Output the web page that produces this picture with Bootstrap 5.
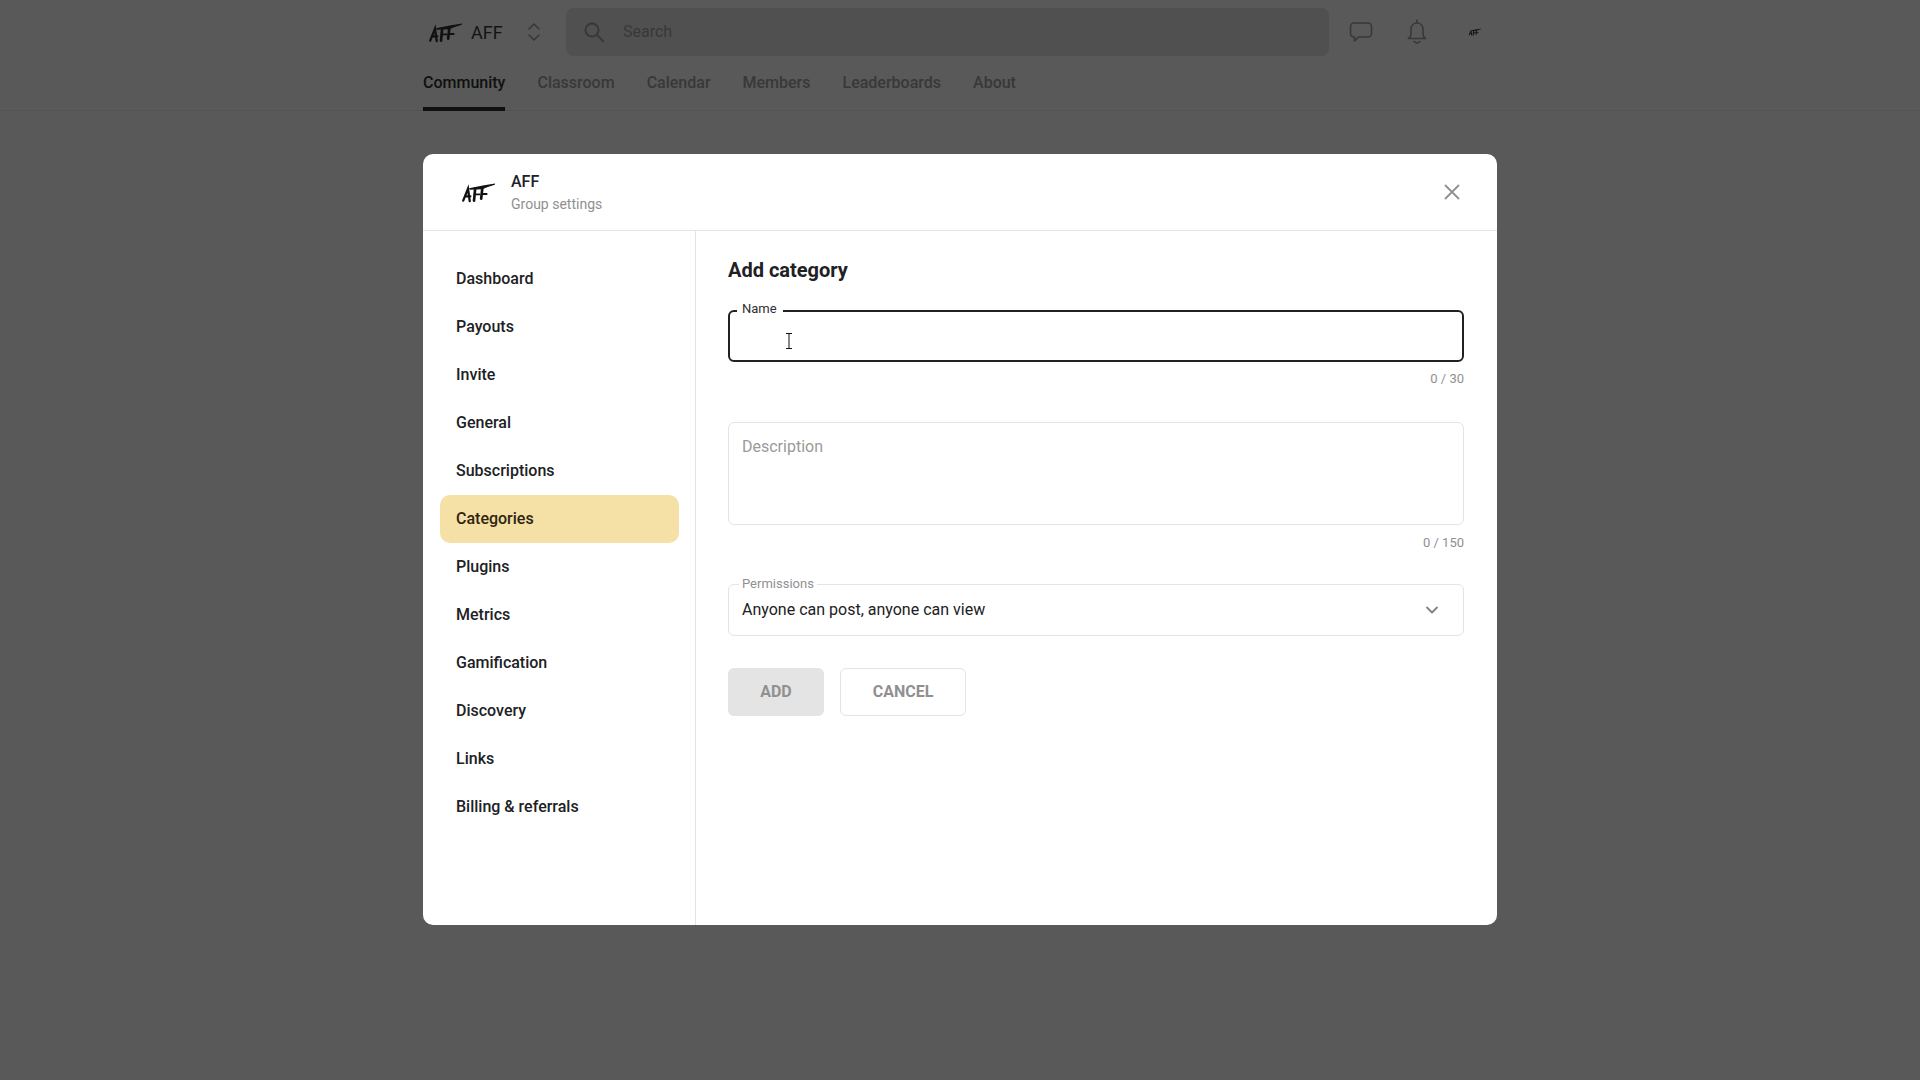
<!doctype html>
<html lang="en">
<head>
<meta charset="utf-8">
<title>AFF - Group settings</title>
<link href="https://cdn.jsdelivr.net/npm/bootstrap@5.3.0/dist/css/bootstrap.min.css" rel="stylesheet">
<style>
html,body{height:100%}
body{background:#595959;font-family:Roboto,"Liberation Sans",sans-serif;color:#202124;overflow:hidden}
.pg-head{border-bottom:1px solid #535353;height:111px}
.pg-wrap{width:1074px;margin:0 auto}
.top-row{height:64px}
.brand-logo{margin-left:5px}
.brand-name{font-size:18px;color:#141414;margin-left:8px;width:32px}
.updown{margin-left:24px;margin-right:25px}
.search-box{width:763px;height:48px;background:#505050;border-radius:8px;padding-left:17px;color:#383838;font-size:16px}
.search-box span{margin-left:18px}
.head-icons{margin-left:20px}
.bell-ic{margin-left:34px;margin-right:41px}
.tabs{height:47px;gap:32px}
.tab-item{color:#383838;font-weight:500;font-size:16px;line-height:38px;height:47px}
.tab-on{color:#101010;border-bottom:4px solid #101010}
.dlg{width:1074px;height:771px;margin:43px auto 0;background:#fff;border-radius:10px;overflow:hidden}
.dlg-head{height:77px;border-bottom:1px solid #e4e4e4;padding:0 37px 0 38px}
.dlg-title{font-size:16px;font-weight:500;line-height:22px}
.dlg-sub{font-size:14px;color:#909090;line-height:22px}
.dlg-names{margin-left:15px;padding-top:2px}
.dlg-body{height:694px}
.dlg-side{width:273px;border-right:1px solid #e4e4e4;padding:24px 16px 16px 17px}
.side-link{display:block;height:48px;line-height:48px;padding-left:16px;font-size:16px;font-weight:500;color:#202124;border-radius:10px;text-decoration:none}
.side-on{background:#f5e0a6;color:#2e2410}
.dlg-main{padding:27px 33px 20px 32px;width:801px}
.dlg-h{font-size:20px;font-weight:700;line-height:24px;margin:0 0 28px}
.fld{position:relative;border:1px solid #e4e4e4;border-radius:6px;width:100%}
.fld-name{height:52px;border:2px solid #202124}
.fld-desc{height:103px;padding:12px 13px;color:#9a9a9a;font-size:16px;line-height:24px}
.fld-perm{height:52px;padding:0 13px;font-size:16px}
.fld-label{position:absolute;top:-9px;left:10px;padding:0 3px;background:#fff;font-size:13px;line-height:16px}
.fld-name .fld-label{top:-11px;left:7px;padding:0 6px 0 5px;color:#303030}
.fld-perm .fld-label{color:#909090}
.count{font-size:13px;color:#909090;text-align:right;line-height:16px;margin-top:9px}
.count-low{margin-top:10px}
.gap-a{margin-bottom:35px}
.gap-c{margin-bottom:33px}
.gap-b{margin-bottom:32px}
.chev-ic{margin-right:11px}
.dlg-btn{height:48px;border-radius:6px;font-size:16px;font-weight:700;color:#909090;text-transform:uppercase}
.btn-add{width:96px;background:#e4e4e4;border:0;margin-right:16px}
.btn-cancel{width:126px;background:#fff;border:1px solid #e4e4e4}
.ibeam{position:absolute;left:55px;top:21px}
</style>
</head>
<body>
<svg width="0" height="0" class="position-absolute" aria-hidden="true">
  <symbol id="aff" viewBox="0 0 36 22">
    <g stroke="#111" fill="none" stroke-linecap="round">
      <path d="M2 19.500L7 7l1.800 13M4 15h5.500" stroke-width="2.400"/>
      <path d="M14.500 7l-1.200 12.500" stroke-width="2.800"/>
      <path d="M22 6.500l-1.200 11" stroke-width="2.800"/>
      <path d="M14 13h5M21.500 12.500h5" stroke-width="2"/>
    </g>
    <path d="M8 6.500L24 3.500 35.500 1.500 35 3 27 5.500 22 7.500 9 8.200z" fill="#111"/>
  </symbol>
</svg>

<header class="pg-head">
  <div class="pg-wrap">
    <div class="top-row d-flex align-items-center">
      <svg class="brand-logo" width="35" height="21" viewBox="0 0 36 22" aria-hidden="true"><use href="#aff"/></svg>
      <span class="brand-name">AFF</span>
      <svg class="updown" width="14" height="20" viewBox="0 0 14 20" fill="none" stroke="#383838" stroke-width="1.600" stroke-linecap="round" stroke-linejoin="round"><path d="M2 7l5-5 5 5M2 13l5 5 5-5"/></svg>
      <div class="search-box d-flex align-items-center">
        <svg width="22" height="22" viewBox="0 0 22 22" fill="none" stroke="#383838" stroke-width="2"><circle cx="9" cy="9" r="6.500"/><path d="M14 14l6 6" stroke-linecap="round"/></svg>
        <span>Search</span>
      </div>
      <div class="head-icons d-flex align-items-center">
        <svg width="24" height="22" viewBox="0 0 24 22" fill="none" stroke="#383838" stroke-width="1.600" stroke-linejoin="round"><path d="M5 2h14a3.500 3.500 0 0 1 3.500 3.500v7a3.500 3.500 0 0 1-3.500 3.500H9.500L5.500 20v-4H5a3.500 3.500 0 0 1-3.500-3.500v-7A3.500 3.500 0 0 1 5 2z"/></svg>
        <svg class="bell-ic" width="20" height="26" viewBox="0 0 20 26" fill="none" stroke="#383838" stroke-width="1.600" stroke-linecap="round" stroke-linejoin="round"><path d="M10 1v3M10 4c-3.800 0-6 3-6 6.500v4.500c0 2-1 3.500-2.500 4.500h17c-1.500-1-2.500-2.500-2.500-4.500v-4.500C16 7 13.800 4 10 4zM7 22.500c1.800 1.700 4.200 1.700 6 0"/></svg>
        <svg width="14" height="8" viewBox="0 0 36 22"><use href="#aff"/></svg>
      </div>
    </div>
    <nav class="tabs d-flex">
      <a class="tab-item tab-on text-decoration-none">Community</a>
      <a class="tab-item text-decoration-none">Classroom</a>
      <a class="tab-item text-decoration-none">Calendar</a>
      <a class="tab-item text-decoration-none">Members</a>
      <a class="tab-item text-decoration-none">Leaderboards</a>
      <a class="tab-item text-decoration-none">About</a>
    </nav>
  </div>
</header>

<main class="dlg">
  <div class="dlg-head d-flex align-items-center">
    <svg width="35" height="21" viewBox="0 0 36 22" aria-hidden="true"><use href="#aff"/></svg>
    <div class="dlg-names flex-grow-1">
      <div class="dlg-title">AFF</div>
      <div class="dlg-sub">Group settings</div>
    </div>
    <svg width="16" height="16" viewBox="0 0 16 16" stroke="#909090" stroke-width="1.800" stroke-linecap="round"><path d="M1.500 1.500l13 13M14.500 1.500l-13 13"/></svg>
  </div>
  <div class="dlg-body d-flex">
    <aside class="dlg-side">
      <a class="side-link">Dashboard</a>
      <a class="side-link">Payouts</a>
      <a class="side-link">Invite</a>
      <a class="side-link">General</a>
      <a class="side-link">Subscriptions</a>
      <a class="side-link side-on">Categories</a>
      <a class="side-link">Plugins</a>
      <a class="side-link">Metrics</a>
      <a class="side-link">Gamification</a>
      <a class="side-link">Discovery</a>
      <a class="side-link">Links</a>
      <a class="side-link">Billing &amp; referrals</a>
    </aside>
    <section class="dlg-main">
      <h2 class="dlg-h">Add category</h2>
      <div class="fld fld-name">
        <span class="fld-label">Name</span>
        <svg class="ibeam" width="8" height="16" viewBox="0 0 8 16" fill="none" stroke="#111" stroke-width="1"><path d="M1 .5h6M1 15.500h6M4 .5v15"/></svg>
      </div>
      <div class="count gap-a">0 / 30</div>
      <div class="fld fld-desc">Description</div>
      <div class="count count-low gap-c">0 / 150</div>
      <div class="fld fld-perm d-flex align-items-center justify-content-between gap-b">
        <span class="fld-label">Permissions</span>
        <span>Anyone can post, anyone can view</span>
        <svg class="chev-ic" width="14" height="10" viewBox="0 0 14 10" fill="none" stroke="#808080" stroke-width="1.800" stroke-linecap="round" stroke-linejoin="round"><path d="M2 2.500l5 5 5-5"/></svg>
      </div>
      <div class="d-flex">
        <button class="dlg-btn btn-add" type="button">Add</button>
        <button class="dlg-btn btn-cancel" type="button">Cancel</button>
      </div>
    </section>
  </div>
</main>
</body>
</html>
